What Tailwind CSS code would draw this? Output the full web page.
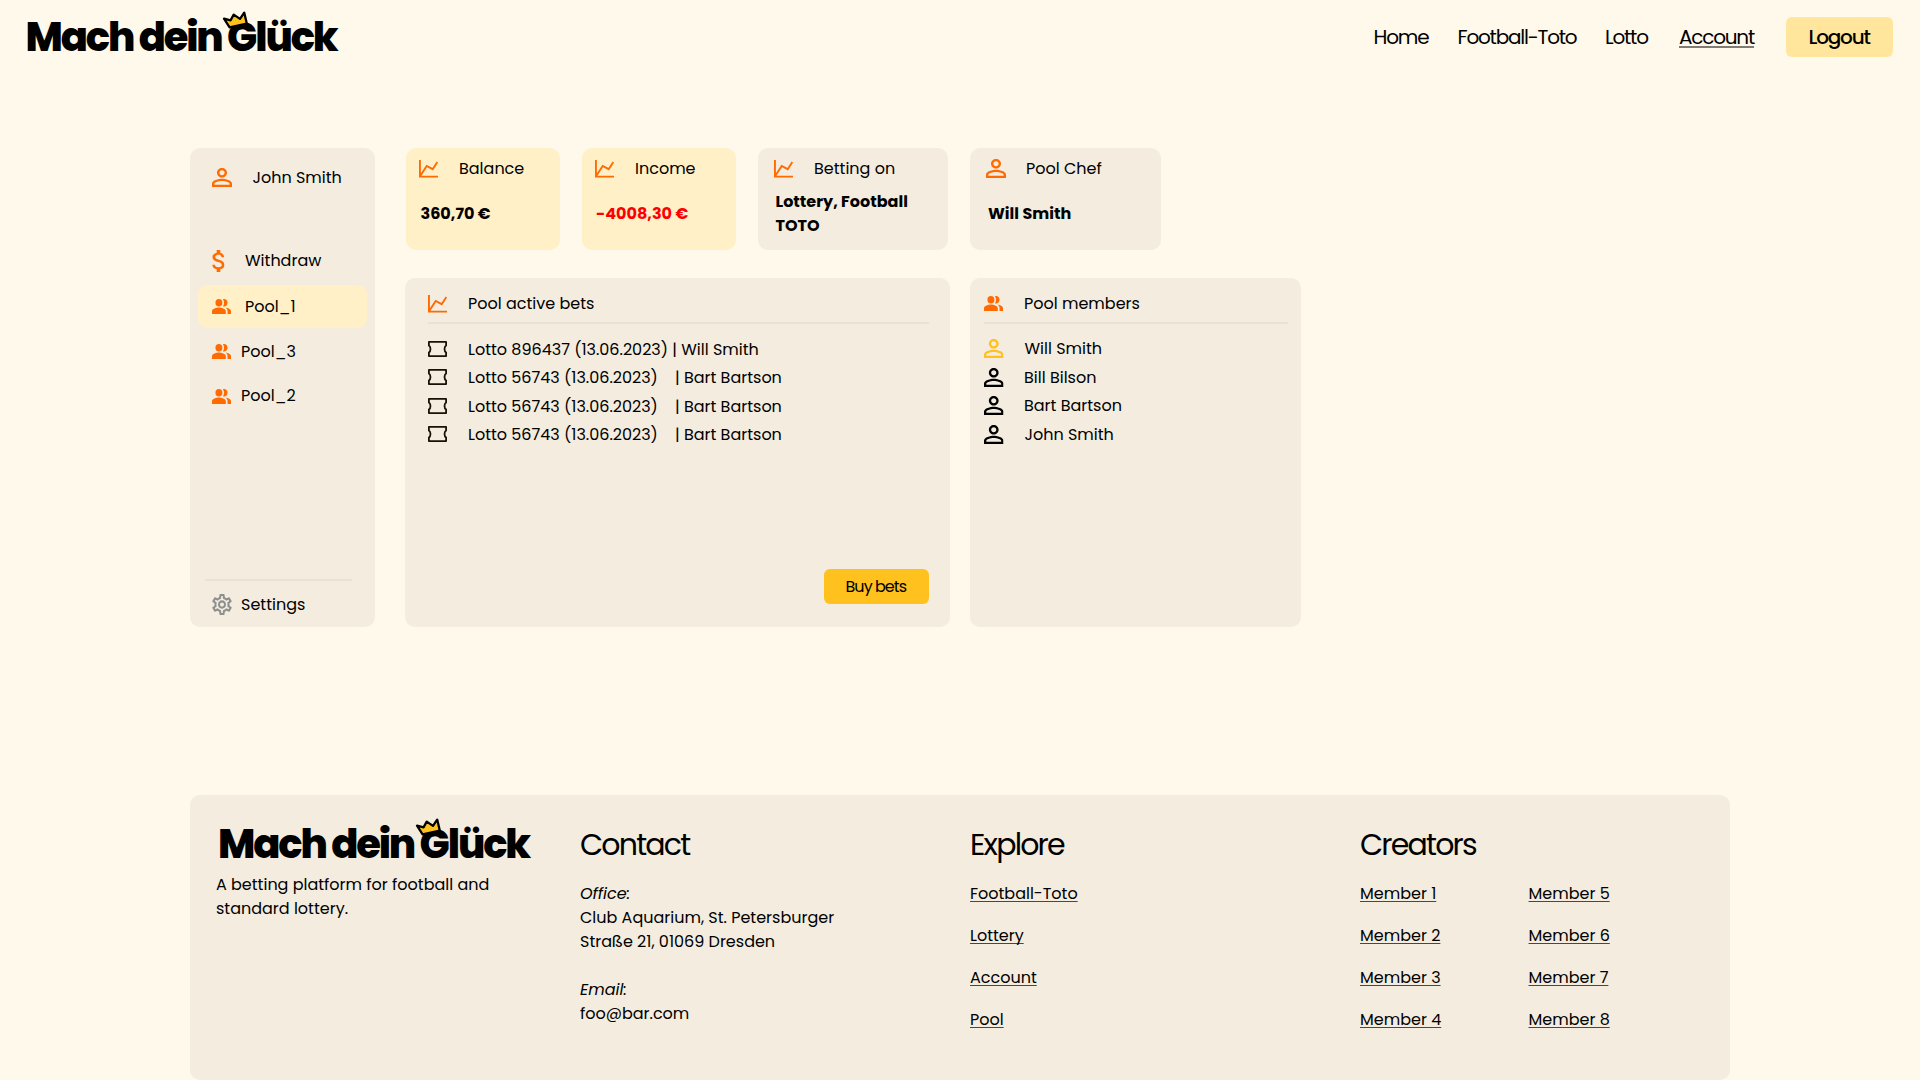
<!DOCTYPE html>
<html lang="en">
<head>
<meta charset="utf-8">
<title>Mach dein Glück – Account</title>
<script src="https://cdn.jsdelivr.net/npm/@tailwindcss/browser@4"></script>
</head>
<body class="h-[1080px] overflow-hidden bg-[#fff9eb] text-base leading-6 text-black font-[Poppins,Inter,sans-serif]">

<!-- shared icons -->
<svg class="hidden">
  <symbol id="person" viewBox="4 4 16 16" preserveAspectRatio="none"><path fill="currentColor" d="M12 5.9c1.16 0 2.1.94 2.1 2.1s-.94 2.1-2.1 2.1S9.9 9.16 9.9 8s.94-2.1 2.1-2.1m0 9c2.97 0 6.1 1.46 6.1 2.1v1.1H5.9V17c0-.64 3.13-2.1 6.1-2.1M12 4C9.79 4 8 5.79 8 8s1.79 4 4 4 4-1.79 4-4-1.79-4-4-4zm0 9c-2.67 0-8 1.34-8 4v3h16v-3c0-2.66-5.33-4-8-4z"/></symbol>
  <symbol id="people" viewBox="1 4 22 16" preserveAspectRatio="none"><path fill="currentColor" d="M16.67 13.13C18.04 14.06 19 15.32 19 17v3h4v-3c0-2.18-3.57-3.47-6.33-3.87zM9 4a4 4 0 1 0 0 8a4 4 0 1 0 0-8zM15 12c2.21 0 4-1.79 4-4s-1.79-4-4-4c-.47 0-.91.1-1.33.24C14.5 5.27 15 6.58 15 8s-.5 2.73-1.33 3.76c.42.14.86.24 1.33.24zM9 13c-2.67 0-8 1.34-8 4v3h16v-3c0-2.66-5.33-4-8-4z"/></symbol>
  <symbol id="dollar" viewBox="6.1 3 10.4 18" preserveAspectRatio="none"><path fill="currentColor" d="M11.8 10.9c-2.27-.59-3-1.2-3-2.15 0-1.09 1.01-1.85 2.7-1.85 1.78 0 2.44.85 2.5 2.1h2.21c-.07-1.72-1.12-3.3-3.21-3.81V3h-3v2.16c-1.94.42-3.5 1.68-3.5 3.61 0 2.31 1.91 3.46 4.7 4.13 2.5.6 3 1.48 3 2.41 0 .69-.49 1.79-2.7 1.79-2.06 0-2.87-.92-2.98-2.1h-2.2c.12 2.19 1.76 3.42 3.68 3.83V21h3v-2.15c1.95-.37 3.5-1.5 3.5-3.55 0-2.84-2.43-3.81-4.7-4.4z"/></symbol>
  <symbol id="chart" viewBox="0 0 19 18"><path fill="none" stroke="currentColor" stroke-width="1.9" d="M.95 0V16.6H19M1.5 15.4L7.7 6L13.7 9.2L18.4 2"/></symbol>
  <symbol id="ticket" viewBox="0 0 19 16"><path fill="none" stroke="currentColor" stroke-width="1.8" stroke-linejoin="round" d="M.9.9H18.1V4.4C16 5.8 16 10.2 18.1 11.6V15.1H.9V11.6C3 10.2 3 5.8 .9 4.4Z"/></symbol>
  <symbol id="gear" viewBox="2 2 20 20" preserveAspectRatio="none"><path fill="currentColor" d="M19.43 12.98c.04-.32.07-.64.07-.98 0-.34-.03-.66-.07-.98l2.11-1.65c.19-.15.24-.42.12-.64l-2-3.46c-.09-.16-.26-.25-.44-.25-.06 0-.12.01-.17.03l-2.49 1c-.52-.4-1.08-.73-1.69-.98l-.38-2.65C14.46 2.18 14.25 2 14 2h-4c-.25 0-.46.18-.49.42l-.38 2.65c-.61.25-1.17.59-1.69.98l-2.49-1c-.06-.02-.12-.03-.18-.03-.17 0-.34.09-.43.25l-2 3.46c-.13.22-.07.49.12.64l2.11 1.65c-.04.32-.07.65-.07.98 0 .33.03.66.07.98l-2.11 1.65c-.19.15-.24.42-.12.64l2 3.46c.09.16.26.25.44.25.06 0 .12-.01.17-.03l2.49-1c.52.4 1.08.73 1.69.98l.38 2.65c.03.24.24.42.49.42h4c.25 0 .46-.18.49-.42l.38-2.65c.61-.25 1.17-.59 1.69-.98l2.49 1c.06.02.12.03.18.03.17 0 .34-.09.43-.25l2-3.46c.12-.22.07-.49-.12-.64l-2.11-1.65zm-1.98-1.71c.04.31.05.52.05.73 0 .21-.02.43-.05.73l-.14 1.13.89.7 1.08.84-.7 1.21-1.27-.51-1.04-.42-.9.68c-.43.32-.84.56-1.25.73l-1.06.43-.16 1.13-.2 1.35h-1.4l-.19-1.35-.16-1.13-1.06-.43c-.43-.18-.83-.41-1.23-.71l-.91-.7-1.06.43-1.27.51-.7-1.21 1.08-.84.89-.7-.14-1.13c-.03-.31-.05-.54-.05-.74s.02-.43.05-.73l.14-1.13-.89-.7-1.08-.84.7-1.21 1.27.51 1.04.42.9-.68c.43-.32.84-.56 1.25-.73l1.06-.43.16-1.13.2-1.35h1.39l.19 1.35.16 1.13 1.06.43c.43.18.83.41 1.23.71l.91.7 1.06-.43 1.27-.51.7 1.21-1.07.85-.89.7.14 1.13zM12 8c-2.21 0-4 1.79-4 4s1.79 4 4 4 4-1.79 4-4-1.79-4-4-4zm0 6c-1.1 0-2-.9-2-2s.9-2 2-2 2 .9 2 2-.9 2-2 2z"/></symbol>
  <symbol id="crown" viewBox="220 9 30 22"><path fill="#ffc11e" stroke="#000" stroke-width="2.3" stroke-linejoin="round" d="M224 18.6L230.6 20.3L233.7 14.6L240 18.9L244.2 12.6L246.8 23.6L229.6 27.4Z"/></symbol>
</svg>

<header class="flex h-[148px] items-start pl-[25.5px]">
  <a class="relative mt-[7px] h-[60px] w-[1347.5px] text-[40px] leading-[60px] font-extrabold tracking-[-0.054em]">
    Mach dein Glück
    <svg class="absolute top-[2px] left-[194.5px] h-[22px] w-[30px]"><use href="#crown"/></svg>
  </a>
  <nav class="mt-[17px] flex h-10 items-center text-xl leading-[30px] tracking-[-0.06em]">
    <a class="w-[84px] pl-[0.5px]">Home</a>
    <a class="w-[148px] pl-[0.5px]">Football-Toto</a>
    <a class="w-[74px]">Lotto</a>
    <a class="w-[106.5px]"><span class="underline decoration-[#7f7c76] decoration-2 underline-offset-2">Account</span></a>
    <a class="flex h-10 w-[107.5px] items-center rounded-[6px] bg-[#ffe69c] pl-[23px] font-medium">Logout</a>
  </nav>
</header>

<main class="flex h-[479px] pl-[190px]">
  <aside class="w-[185px] rounded-[10px] bg-[#f3ecdf] pt-[17px]">
    <div class="flex h-6 items-center pl-[22px]">
      <svg class="h-[19px] w-5 text-[#ff6b00]"><use href="#person"/></svg>
      <span class="ml-[20.5px] pt-0.5">John Smith</span>
    </div>
    <div class="mt-[59px] flex h-6 items-center pl-[22px]">
      <svg class="mt-0.5 h-[22px] w-[12.5px] text-[#ff6b00]"><use href="#dollar"/></svg>
      <span class="ml-[20.5px] pt-0.5">Withdraw</span>
    </div>
    <div class="mt-[13px] ml-2 flex h-[43px] w-[169px] items-center rounded-[9px] bg-[#fff0c8] pl-[14px]">
      <svg class="h-[15px] w-[19px] text-[#ff6b00]"><use href="#people"/></svg>
      <span class="ml-[14px]">Pool_1</span>
    </div>
    <div class="mt-[11px] flex h-6 items-center pl-[22px]">
      <svg class="h-[15px] w-[19px] text-[#ff6b00]"><use href="#people"/></svg>
      <span class="ml-[10px] pt-0.5">Pool_3</span>
    </div>
    <div class="mt-[21px] flex h-6 items-center pl-[22px]">
      <svg class="h-[15px] w-[19px] text-[#ff6b00]"><use href="#people"/></svg>
      <span class="ml-[10px]">Pool_2</span>
    </div>
    <div class="mt-[171px] ml-[15px] h-0.5 w-[147px] bg-[#eae3d4]"></div>
    <div class="mt-[11px] flex h-6 items-center pl-[22px]">
      <svg class="mt-px h-[21px] w-5 text-[#8f8f8f]"><use href="#gear"/></svg>
      <span class="ml-[9px] pt-0.5">Settings</span>
    </div>
  </aside>

  <div class="ml-[30px]">
    <section class="flex h-[101.7px] gap-[22px] pl-px">
      <div class="w-[154px] rounded-[10px] bg-[#fff0c8] pt-2">
        <div class="flex h-6 items-center pl-[13px]">
          <svg class="mt-px h-[18px] w-[19px] text-[#ff6b00]"><use href="#chart"/></svg>
          <span class="ml-[21px] pt-0.5">Balance</span>
        </div>
        <p class="mt-[22px] pl-[14.5px] font-bold">360,70 €</p>
      </div>
      <div class="w-[154px] rounded-[10px] bg-[#fff0c8] pt-2">
        <div class="flex h-6 items-center pl-[13px]">
          <svg class="mt-px h-[18px] w-[19px] text-[#ff6b00]"><use href="#chart"/></svg>
          <span class="ml-[21px] pt-0.5">Income</span>
        </div>
        <p class="mt-[22px] pl-[14px] font-bold text-[#ff0000]">-4008,30 €</p>
      </div>
      <div class="w-[190px] rounded-[10px] bg-[#f3ecdf] pt-2">
        <div class="flex h-6 items-center pl-4">
          <svg class="mt-px h-[18px] w-[19px] text-[#ff6b00]"><use href="#chart"/></svg>
          <span class="ml-[21px] pt-0.5">Betting on</span>
        </div>
        <p class="mt-[10px] pl-[17.5px] font-bold">Lottery, Football<br>TOTO</p>
      </div>
      <div class="w-[190.5px] rounded-[10px] bg-[#f3ecdf] pt-2">
        <div class="flex h-6 items-center pl-4">
          <svg class="mt-px h-[19px] w-5 text-[#ff6b00]"><use href="#person"/></svg>
          <span class="ml-5 pt-0.5">Pool Chef</span>
        </div>
        <p class="mt-[22px] pl-[18px] font-bold">Will Smith</p>
      </div>
    </section>

    <section class="mt-[28px] flex h-[349.3px] gap-5">
      <div class="flex w-[545px] flex-col rounded-[10px] bg-[#f3ecdf] pt-[13px] pr-[21px] pb-[22.5px] pl-[23px]">
        <div class="flex h-6 items-center">
          <svg class="mt-0.5 h-[18px] w-[19px] text-[#ff6b00]"><use href="#chart"/></svg>
          <span class="ml-[21px] pt-0.5">Pool active bets</span>
        </div>
        <div class="mt-[7px] h-0.5 bg-[#e7e2d3]"></div>
        <ul class="mt-[13px] flex flex-col gap-[4.6px] whitespace-nowrap">
          <li class="flex h-6 items-center">
            <svg class="h-4 w-[19px] text-[#1a1005]"><use href="#ticket"/></svg>
            <span class="ml-[21px] pt-0.5">Lotto 896437 (13.06.2023) | Will Smith</span>
          </li>
          <li class="flex h-6 items-center">
            <svg class="h-4 w-[19px] text-[#1a1005]"><use href="#ticket"/></svg>
            <span class="ml-[21px] w-[207px] pt-0.5">Lotto 56743 (13.06.2023)</span>
            <span class="pt-0.5">| Bart Bartson</span>
          </li>
          <li class="flex h-6 items-center">
            <svg class="h-4 w-[19px] text-[#1a1005]"><use href="#ticket"/></svg>
            <span class="ml-[21px] w-[207px] pt-0.5">Lotto 56743 (13.06.2023)</span>
            <span class="pt-0.5">| Bart Bartson</span>
          </li>
          <li class="flex h-6 items-center">
            <svg class="h-4 w-[19px] text-[#1a1005]"><use href="#ticket"/></svg>
            <span class="ml-[21px] w-[207px] pt-0.5">Lotto 56743 (13.06.2023)</span>
            <span class="pt-0.5">| Bart Bartson</span>
          </li>
        </ul>
        <button class="mt-auto h-[35.5px] w-[105.5px] self-end rounded-[6px] bg-[#ffc11e] pl-[22px] text-left tracking-[-0.06em]">Buy bets</button>
      </div>

      <div class="w-[331px] rounded-[10px] bg-[#f3ecdf] pt-[13px] pr-[13px] pl-[14px]">
        <div class="flex h-6 items-center">
          <svg class="mt-0.5 h-[15px] w-[19px] text-[#ff6b00]"><use href="#people"/></svg>
          <span class="ml-[21px] pt-0.5">Pool members</span>
        </div>
        <div class="mt-[7px] h-0.5 bg-[#e7e2d3]"></div>
        <ul class="mt-[12.4px] flex flex-col gap-[4.7px]">
          <li class="flex h-6 items-center"><svg class="mt-px h-[19px] w-[19.5px] text-[#ffc11e]"><use href="#person"/></svg><span class="ml-[21px] pt-0.5">Will Smith</span></li>
          <li class="flex h-6 items-center"><svg class="mt-px h-[19px] w-[19.5px]"><use href="#person"/></svg><span class="ml-[20.5px] pt-0.5">Bill Bilson</span></li>
          <li class="flex h-6 items-center"><svg class="mt-px h-[19px] w-[19.5px]"><use href="#person"/></svg><span class="ml-[20.5px] pt-0.5">Bart Bartson</span></li>
          <li class="flex h-6 items-center"><svg class="mt-px h-[19px] w-[19.5px]"><use href="#person"/></svg><span class="ml-[21px] pt-0.5">John Smith</span></li>
        </ul>
      </div>
    </section>
  </div>
</main>

<footer class="mt-[168px] ml-[190px] grid h-[284.6px] w-[1540px] grid-cols-[390px_390px_390px_370px] rounded-[10px] bg-[#f3ecdf]">
  <div class="pt-[19px]">
    <a class="relative ml-[28px] block h-[60px] text-[40px] leading-[60px] font-extrabold tracking-[-0.054em] whitespace-nowrap">
      Mach dein Glück
      <svg class="absolute top-[2px] left-[194.5px] h-[22px] w-[30px]"><use href="#crown"/></svg>
    </a>
    <p class="-mt-px ml-[26px] whitespace-nowrap">A betting platform for football and<br>standard lottery.</p>
  </div>
  <div class="pt-[31.5px] whitespace-nowrap">
    <h2 class="text-3xl leading-9 tracking-[-0.06em]">Contact</h2>
    <p class="mt-[19.5px]"><em>Office:</em><br>Club Aquarium, St. Petersburger<br>Straße 21, 01069 Dresden</p>
    <p class="mt-6"><em>Email:</em><br>foo@bar.com</p>
  </div>
  <div class="pt-[31.5px]">
    <h2 class="text-3xl leading-9 tracking-[-0.06em]">Explore</h2>
    <ul class="mt-[19.5px] flex flex-col items-start gap-[18px] underline decoration-[#4a4845] decoration-1 underline-offset-2 [text-decoration-skip-ink:none]">
      <li>Football-Toto</li>
      <li>Lottery</li>
      <li>Account</li>
      <li>Pool</li>
    </ul>
  </div>
  <div class="pt-[31.5px]">
    <h2 class="text-3xl leading-9 tracking-[-0.06em]">Creators</h2>
    <div class="mt-[19.5px] flex underline decoration-[#4a4845] decoration-1 underline-offset-2 [text-decoration-skip-ink:none]">
      <ul class="flex w-[168.5px] flex-col items-start gap-[18px]">
        <li>Member 1</li><li>Member 2</li><li>Member 3</li><li>Member 4</li>
      </ul>
      <ul class="flex flex-col items-start gap-[18px]">
        <li>Member 5</li><li>Member 6</li><li>Member 7</li><li>Member 8</li>
      </ul>
    </div>
  </div>
</footer>
</body>
</html>
